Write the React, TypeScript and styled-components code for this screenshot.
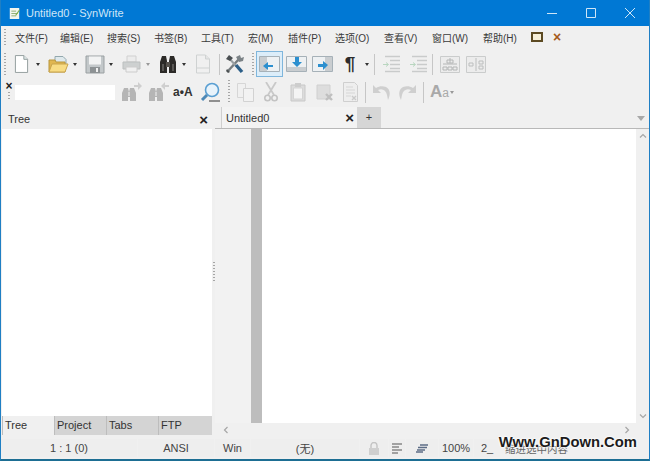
import React from "react";
import styled, { createGlobalStyle } from "styled-components";

const GlobalStyle = createGlobalStyle`
  html, body { margin: 0; padding: 0; background: #f0f0f0; }
  body { font-family: "Liberation Sans", "Noto Sans CJK SC", sans-serif; }
`;

const MENU: [string, number][] = [
  ["文件(F)", 45], ["编辑(E)", 47], ["搜索(S)", 47], ["书签(B)", 47], ["工具(T)", 47], ["宏(M)", 40],
  ["插件(P)", 47], ["选项(O)", 49], ["查看(V)", 48], ["窗口(W)", 51], ["帮助(H)", 47],
];

function DocIcon({ muted }: { muted?: boolean }) {
  const line = muted ? "#cfd2d2" : "#8f9a9a";
  return (
    <svg width="16" height="20" viewBox="0 0 16 20">
      <path d="M1.5 1h9l4 4v14h-13z" fill={muted ? "#f0f0f0" : "#fff"} stroke={line} />
      <path d="M10.5 1v4h4" fill={muted ? "#e4e4e4" : "#dfeaea"} stroke={line} />
      {muted && <path d="M1 14h13" stroke={line} />}
    </svg>
  );
}

function OpenIcon() {
  return (
    <svg width="21" height="19" viewBox="0 0 21 19">
      <path d="M7 8V1.5h8l3 3V9z" fill="#dfe9ec" stroke="#93a8ae" />
      <path d="M1 5h6l1 2h9v10H1z" fill="#e0b650" stroke="#b8963f" />
      <path d="M1 17l3-8h16l-3 8z" fill="#f8dc84" stroke="#c9a44c" />
    </svg>
  );
}

function SaveIcon() {
  return (
    <svg width="20" height="19" viewBox="0 0 20 19">
      <path d="M1 1h18v17H1z" fill="#c3c8ca" stroke="#9aa0a2" />
      <path d="M4 1.5h12v8H4z" fill="#f2f3f3" />
      <path d="M5 12h10v6H5z" fill="#8d9294" />
      <path d="M11 13h2v4h-2z" fill="#f0f0f0" />
    </svg>
  );
}

function PrintIcon() {
  return (
    <svg width="19" height="18" viewBox="0 0 19 18">
      <path d="M5 1h9v6H5z" fill="#ececec" stroke="#d0d0d0" />
      <path d="M1 7h17v7H1z" fill="#cdd0d0" stroke="#bcbfbf" />
      <path d="M4 12h11v5H4z" fill="#f0f0f0" stroke="#cccccc" />
    </svg>
  );
}

function BinocularIcon() {
  return (
    <svg width="20" height="20" viewBox="0 0 20 20">
      <path d="M2 19V8l2-6h4l1 5v12z" fill="#2c2a28" />
      <path d="M18 19V8l-2-6h-4l-1 5v12z" fill="#2c2a28" />
      <path d="M8 8h4v5H8z" fill="#55514c" />
      <path d="M4 10h2v7H4zM14 10h2v7h-2z" fill="#5a5855" />
    </svg>
  );
}

function FindDirIcon({ arrow }: { arrow: "l" | "r" }) {
  return (
    <svg width="20" height="20" viewBox="0 0 20 20">
      <path d="M0 19v-8l2-5h4l1 4v9z" fill="#b5b5b5" />
      <path d="M14 19v-8l-2-5H8l-1 4v9z" fill="#b5b5b5" />
      <path d="M6 10h2v4H6z" fill="#d4d4d4" />
      <path d="M6 15h2v4H6z" fill="#f0f0f0" />
      <path d={arrow === "r" ? "M12 3h4V0l4 4-4 4V5h-4z" : "M20 3h-4V0l-4 4 4 4V5h4z"} fill="#cfcfcf" />
    </svg>
  );
}

function ToolsIcon() {
  return (
    <svg width="20" height="20" viewBox="0 0 20 20">
      <path d="M3 17L14 5" stroke="#777d80" strokeWidth="2.4" />
      <path d="M11 3l4-2 1 3 3-1-1 4-4 1z" fill="#7b8286" />
      <path d="M2 15l3 3-2 1-2-2z" fill="#4b5052" />
      <path d="M4 4l7 8" stroke="#9aa0a3" strokeWidth="2" />
      <path d="M11 11l6 7" stroke="#2c5f88" strokeWidth="3.4" />
      <path d="M1 5l3-4 4 3-3 3z" fill="#4a4f52" />
    </svg>
  );
}

function PaneIcon({ dir }: { dir: "l" | "d" | "r" }) {
  const arrow = {
    l: "M4 10l5-4v3h5v2H9v3z",
    d: "M9 1h4v5h3l-5 5-5-5h3z",
    r: "M16 9l-5-4v3H6v3h5v3z",
  }[dir];
  return (
    <svg width="21" height="16" viewBox="0 0 21 16">
      <path d="M.5.5h20v15H.5z" fill="#eef1f3" stroke="#a6b1b8" />
      {dir === "l" && <path d="M1 1h7v14H1z" fill="#c9cdd0" />}
      {dir === "d" && <path d="M1 11h19v4H1z" fill="#c9cdd0" />}
      {dir === "r" && <path d="M13 1h7v14h-7z" fill="#c9cdd0" />}
      <path d={arrow} fill="#2b8fcf" />
    </svg>
  );
}

function IndentIcon() {
  return (
    <svg width="20" height="18" viewBox="0 0 20 18">
      <path d="M3 1.5h15M8 5.5h10M8 9.5h10M8 13.5h10M3 16.5h15" stroke="#c9cbcb" strokeWidth="1.4" />
      <path d="M1 9.5h5M4 7.5l2.5 2-2.5 2" stroke="#b9d6c0" fill="none" />
    </svg>
  );
}

function TreeBoxIcon({ flip }: { flip?: boolean }) {
  return (
    <svg width="20" height="17" viewBox="0 0 20 17">
      <path d="M.5.5h19v16H.5z" fill="#ececec" stroke="#cacccc" />
      {flip ? (
        <path d="M10 2v13M3 7h4v3H3zM13 5h4v3h-4zM13 10h4v3h-4z" stroke="#bcbebe" fill="none" />
      ) : (
        <path d="M10 2v5M3 8h14M3 11h4v3H3zM8 11h4v3H8zM13 11h4v3h-4zM7 4h6v3H7z" stroke="#b4b6b6" fill="none" />
      )}
    </svg>
  );
}

function MagnifierIcon() {
  return (
    <svg width="21" height="21" viewBox="0 0 21 21">
      <circle cx="12" cy="8" r="6.5" fill="#e8f3fb" stroke="#5a9fd2" strokeWidth="1.6" />
      <path d="M7 13l-5 5" stroke="#4d88b6" strokeWidth="3" />
      <path d="M9 19h11" stroke="#777" strokeWidth="1.6" />
    </svg>
  );
}

function CopyIcon() {
  return (
    <svg width="19" height="20" viewBox="0 0 19 20">
      <path d="M1.5 1.5h8v14h-8z" fill="#f0f0f0" stroke="#d6d6d6" />
      <path d="M7.5 6.5h10v13h-10z" fill="#f2f2f2" stroke="#d2d2d2" />
    </svg>
  );
}

function CutIcon() {
  return (
    <svg width="14" height="20" viewBox="0 0 14 20">
      <path d="M2 0l8 13M12 0L4 13" stroke="#c9c9c9" strokeWidth="1.8" />
      <circle cx="3.5" cy="16" r="2.7" fill="none" stroke="#c3c3c3" strokeWidth="1.6" />
      <circle cx="10.5" cy="16" r="2.7" fill="none" stroke="#c3c3c3" strokeWidth="1.6" />
    </svg>
  );
}

function PasteIcon() {
  return (
    <svg width="16" height="20" viewBox="0 0 16 20">
      <path d="M1 3h14v16H1z" fill="#dcdcdc" stroke="#c8c8c8" />
      <path d="M3.5 6h9v11h-9z" fill="#f4f4f4" stroke="#d4d4d4" />
      <path d="M5 1h6v4H5z" fill="#cdcdcd" />
    </svg>
  );
}

function DeleteIcon() {
  return (
    <svg width="18" height="20" viewBox="0 0 18 20">
      <path d="M1 3h13v14H1z" fill="#dddddd" stroke="#d0d0d0" />
      <path d="M10 12l6 6M16 12l-6 6" stroke="#bfbfbf" strokeWidth="2.4" />
    </svg>
  );
}

function SheetIcon() {
  return (
    <svg width="15" height="20" viewBox="0 0 15 20">
      <path d="M.5.5h11l3 3v16H.5z" fill="#eeeeee" stroke="#cfcfcf" />
      <path d="M3 5h7M3 8h9M3 11h9M3 14h5" stroke="#d6d6d6" />
      <path d="M9 14l4 4M13 14l-4 4" stroke="#cacaca" strokeWidth="1.4" />
    </svg>
  );
}

function UndoIcon({ flip }: { flip?: boolean }) {
  return (
    <svg width="19" height="17" viewBox="0 0 19 17" style={flip ? { transform: "scaleX(-1)" } : undefined}>
      <path d="M1 1v8h8L6 6c4-2 8 0 9 5l1 5c3-6 2-11-2-13-3-1-7-1-10 1z" fill="#cfcfcf" />
    </svg>
  );
}

function LockIcon() {
  return (
    <svg width="12" height="13" viewBox="0 0 12 13">
      <path d="M3 6V3.5a3 3 0 0 1 6 0V6" fill="none" stroke="#c4c4c4" strokeWidth="1.4" />
      <path d="M1 6h10v7H1z" fill="#cfcfcf" />
    </svg>
  );
}

function AlignIcon({ tight }: { tight?: boolean }) {
  if (tight) {
    return (
      <svg width="12" height="9" viewBox="0 0 12 9">
        <path d="M4 1h8M2 3.5h9M1 6h8M0 8h7" stroke="#5d6d86" strokeWidth="1.4" />
      </svg>
    );
  }
  return (
    <svg width="10" height="11" viewBox="0 0 10 11">
      <path d="M0 1h10M0 4h7M0 7h10M0 10h6" stroke="#555" />
    </svg>
  );
}

export default function App() {
  return (
    <>
      <GlobalStyle />
      <Window>
        <TitleBar>
          <AppIcon viewBox="0 0 14 16">
            <path d="M1 1h12v14H1z" fill="#f4f6ee" />
            <path d="M3 5h6M3 8h8M3 11h6" stroke="#7aa05a" />
            <path d="M8 10l5-7 1 1-5 7z" fill="#7fb04a" />
          </AppIcon>
          <TitleText>Untitled0 - SynWrite</TitleText>
          <WinButton>
            <svg width="10" height="10" viewBox="0 0 10 10"><path d="M0 5.5h10" stroke="#cfe6f7" /></svg>
          </WinButton>
          <WinButton>
            <svg width="10" height="10" viewBox="0 0 10 10"><path d="M.5.5h9v9h-9z" fill="none" stroke="#cfe6f7" /></svg>
          </WinButton>
          <WinButton>
            <svg width="10" height="10" viewBox="0 0 10 10"><path d="M0 0l10 10M10 0L0 10" stroke="#cfe6f7" /></svg>
          </WinButton>
        </TitleBar>

        <MenuBar>
          <GripDots $h={18} $left={0} />
          <MenuList>
            {MENU.map(([label, w]) => (
              <MenuItem key={label} $w={w}>{label}</MenuItem>
            ))}
          </MenuList>
          <DockBox />
          <MenuClose>×</MenuClose>
        </MenuBar>

        <ToolRow>
          <GripDots $h={22} $left={0} />
          <Slot $w={15} $left={8}><DocIcon /></Slot>
          <Drop $left={7} />
          <Slot $w={21} $left={8}><OpenIcon /></Slot>
          <Drop $left={4} />
          <Slot $w={20} $left={8}><SaveIcon /></Slot>
          <Drop $left={4} />
          <Slot $w={19} $left={9}><PrintIcon /></Slot>
          <Drop $left={5} $muted />
          <Slot $w={20} $left={8}><BinocularIcon /></Slot>
          <Drop $left={4} />
          <Slot $w={16} $left={9}><DocIcon muted /></Slot>
          <Sep $left={8} />
          <Slot $w={20} $left={5}><ToolsIcon /></Slot>
          <GripDots $h={22} $left={7} />
          <ActivePane><PaneIcon dir="l" /></ActivePane>
          <Slot $w={21} $left={3}><PaneIcon dir="d" /></Slot>
          <Slot $w={21} $left={5}><PaneIcon dir="r" /></Slot>
          <Pilcrow>¶</Pilcrow>
          <Drop $left={8} />
          <Sep $left={5} />
          <Slot $w={20} $left={7}><IndentIcon /></Slot>
          <Slot $w={20} $left={7}><IndentIcon /></Slot>
          <Sep $left={3} />
          <Slot $w={20} $left={7}><TreeBoxIcon /></Slot>
          <Slot $w={20} $left={6}><TreeBoxIcon flip /></Slot>
        </ToolRow>

        <ToolRow>
          <FindSide>
            <FindClose>×</FindClose>
            <GripDots $h={8} $left={0} />
          </FindSide>
          <FindInput />
          <Slot $w={20} $left={7}><FindDirIcon arrow="r" /></Slot>
          <Slot $w={20} $left={7}><FindDirIcon arrow="l" /></Slot>
          <CaseSwap>a•A</CaseSwap>
          <Slot $w={21} $left={5}><MagnifierIcon /></Slot>
          <GripDots $h={24} $left={7} />
          <Slot $w={19} $left={6}><CopyIcon /></Slot>
          <Slot $w={14} $left={9}><CutIcon /></Slot>
          <Slot $w={16} $left={12}><PasteIcon /></Slot>
          <Slot $w={18} $left={10}><DeleteIcon /></Slot>
          <Slot $w={15} $left={9}><SheetIcon /></Slot>
          <Sep $left={7} />
          <Slot $w={19} $left={6}><UndoIcon /></Slot>
          <Slot $w={19} $left={7}><UndoIcon flip /></Slot>
          <Sep $left={6} />
          <FontGlyph>A<small>a</small></FontGlyph>
          <Drop $left={1} $muted />
        </ToolRow>

        <Body>
          <LeftPanel>
            <PanelHead>
              <span>Tree</span>
              <HeadClose>×</HeadClose>
            </PanelHead>
            <PanelBody />
            <BottomTabs>
              <BottomTab $active>Tree</BottomTab>
              <BottomTab>Project</BottomTab>
              <BottomTab>Tabs</BottomTab>
              <BottomTab>FTP</BottomTab>
            </BottomTabs>
          </LeftPanel>

          <Splitter><GripDots $h={20} $left={0} /></Splitter>

          <RightPanel>
            <TabStrip>
              <DocTab>
                <span>Untitled0</span>
                <HeadClose>×</HeadClose>
              </DocTab>
              <AddTab>+</AddTab>
              <TabMenu />
            </TabStrip>
            <EditorRow>
              <Gutter />
              <FoldBar />
              <TextArea />
              <VScroll>
                <ScrollArrow viewBox="0 0 8 5"><path d="M1 4l3-3 3 3" /></ScrollArrow>
                <ScrollArrow viewBox="0 0 8 5"><path d="M1 1l3 3 3-3" /></ScrollArrow>
              </VScroll>
            </EditorRow>
            <HScroll>
              <ScrollArrow viewBox="0 0 5 8"><path d="M4 1L1 4l3 3" /></ScrollArrow>
              <ScrollArrow viewBox="0 0 5 8"><path d="M1 1l3 3-3 3" /></ScrollArrow>
            </HScroll>
          </RightPanel>
        </Body>

        <StatusBar>
          <StatusCell $w={136}>1 : 1 (0)</StatusCell>
          <StatusCell $w={76}>ANSI</StatusCell>
          <StatusCell $w={35}>Win</StatusCell>
          <StatusCell $w={108}>(无)</StatusCell>
          <StatusCell $w={28}><LockIcon /></StatusCell>
          <StatusCell $w={16}><AlignIcon /></StatusCell>
          <StatusCell $w={32}><AlignIcon tight /></StatusCell>
          <StatusCell $w={34}>100%</StatusCell>
          <StatusCell $w={26}>2_</StatusCell>
          <HintCell>缩进选中内容</HintCell>
        </StatusBar>

        <Watermark>Www.GnDown.Com</Watermark>
      </Window>
    </>
  );
}

const Window = styled.div`
  position: relative;
  width: 650px;
  height: 461px;
  box-sizing: border-box;
  display: flex;
  flex-direction: column;
  background: #f0f0f0;
  border: 1px solid #1f7fc4;
  border-top: 0;
  border-bottom: 2px solid #1d6e93;
  overflow: hidden;
  color: #333;
  font-size: 11px;
`;

const TitleBar = styled.div`
  height: 26px;
  margin: 0 -1px;
  flex: none;
  display: flex;
  align-items: center;
  padding: 0 1px 0 9px;
  background: #0078d4;
`;

const AppIcon = styled.svg`
  width: 11px;
  height: 13px;
  margin-right: 6px;
`;

const TitleText = styled.div`
  flex: 1;
  color: #cfe6f7;
  font-size: 11px;
`;

const WinButton = styled.div`
  width: 39px;
  height: 26px;
  display: flex;
  align-items: center;
  justify-content: center;
`;

const MenuBar = styled.div`
  height: 24px;
  flex: none;
  display: flex;
  align-items: center;
  padding-left: 3px;
`;

const MenuList = styled.div`
  display: flex;
  margin: -2px 0 0 9px;
`;

const GripDots = styled.div<{ $h: number; $left: number }>`
  width: 2px;
  height: ${(p) => p.$h}px;
  margin-left: ${(p) => p.$left}px;
  flex: none;
  background-image: linear-gradient(#a6a6a6 50%, transparent 50%);
  background-size: 2px 3px;
`;

const MenuItem = styled.div<{ $w: number }>`
  width: ${(p) => p.$w}px;
  flex: none;
  font-size: 10px;
  white-space: nowrap;
  color: #3a3a3a;
`;

const DockBox = styled.div`
  width: 8px;
  height: 6px;
  margin: -2px 0 0 1px;
  border: 2px solid #5c4a22;
  background: #f6efd8;
`;

const MenuClose = styled.div`
  margin: -2px 0 0 10px;
  color: #a55a1a;
  font-size: 14px;
  font-weight: bold;
  line-height: 14px;
`;

const ToolRow = styled.div`
  height: 28px;
  flex: none;
  display: flex;
  align-items: center;
  padding-left: 3px;
`;

const Slot = styled.div<{ $w: number; $left: number }>`
  width: ${(p) => p.$w}px;
  margin-left: ${(p) => p.$left}px;
  flex: none;
  display: flex;
  align-items: center;
  justify-content: center;
`;

const Drop = styled.div<{ $left: number; $muted?: boolean }>`
  flex: none;
  margin-left: ${(p) => p.$left}px;
  border-left: 2px solid transparent;
  border-right: 2px solid transparent;
  border-top: 3px solid ${(p) => (p.$muted ? "#999" : "#333")};
`;

const Sep = styled.div<{ $left: number }>`
  flex: none;
  width: 1px;
  height: 21px;
  margin-left: ${(p) => p.$left}px;
  background: #c6c6c6;
`;

const ActivePane = styled.div`
  flex: none;
  width: 25px;
  height: 24px;
  margin-left: 2px;
  display: flex;
  align-items: center;
  justify-content: center;
  background: #dcedf9;
  border: 1px solid #7fb6dc;
`;

const Pilcrow = styled.div`
  width: 14px;
  margin-left: 10px;
  flex: none;
  font-size: 19px;
  font-weight: bold;
  color: #2c2c2c;
  text-align: center;
`;

const FindSide = styled.div`
  width: 10px;
  flex: none;
  display: flex;
  flex-direction: column;
  align-items: center;
  gap: 1px;
  margin-top: -2px;
`;

const FindClose = styled.div`
  font-size: 12px;
  font-weight: bold;
  line-height: 9px;
  color: #222;
`;

const FindInput = styled.div`
  width: 100px;
  height: 15px;
  flex: none;
  margin-left: 1px;
  background: #fff;
`;

const CaseSwap = styled.div`
  width: 22px;
  margin-left: 4px;
  flex: none;
  font-size: 12px;
  font-weight: bold;
  color: #333;
  white-space: nowrap;
`;

const FontGlyph = styled.div`
  margin-left: 6px;
  flex: none;
  font-size: 17px;
  font-weight: bold;
  color: #a9a9a9;
  small {
    font-size: 12px;
    font-weight: normal;
  }
`;

const Body = styled.div`
  flex: 1;
  min-height: 0;
  display: flex;
`;

const LeftPanel = styled.div`
  width: 210px;
  margin-left: 1px;
  flex: none;
  display: flex;
  flex-direction: column;
  padding-top: 3px;
  padding-bottom: 2px;
  box-sizing: border-box;
`;

const PanelHead = styled.div`
  height: 20px;
  flex: none;
  display: flex;
  align-items: center;
  justify-content: space-between;
  padding: 0 4px 0 6px;
  font-size: 11px;
`;

const HeadClose = styled.div`
  font-size: 15px;
  line-height: 15px;
  font-weight: bold;
  color: #222;
`;

const PanelBody = styled.div`
  flex: 1;
  background: #fff;
`;

const BottomTabs = styled.div`
  height: 19px;
  flex: none;
  display: flex;
  background: #d4d4d4;
`;

const BottomTab = styled.div<{ $active?: boolean }>`
  width: 52px;
  box-sizing: border-box;
  padding-left: 2px;
  border-left: 1px solid #bdbdbd;
  line-height: 19px;
  font-size: 11px;
  background: ${(p) => (p.$active ? "#f0f0f0" : "transparent")};
`;

const Splitter = styled.div`
  width: 3px;
  flex: none;
  display: flex;
  align-items: center;
  justify-content: center;
`;

const RightPanel = styled.div`
  flex: 1;
  min-width: 0;
  display: flex;
  flex-direction: column;
`;

const TabStrip = styled.div`
  height: 22px;
  flex: none;
  display: flex;
  align-items: flex-end;
  padding-left: 6px;
  border-bottom: 1px solid #b8b8b8;
`;

const DocTab = styled.div`
  width: 136px;
  height: 21px;
  box-sizing: border-box;
  display: flex;
  align-items: center;
  justify-content: space-between;
  padding: 0 3px 0 4px;
  border-left: 1px solid #cfcfcf;
  background: #f3f3f3;
  font-size: 11px;
`;

const AddTab = styled.div`
  width: 24px;
  height: 21px;
  text-align: center;
  line-height: 21px;
  background: #d6d6d6;
  font-size: 11px;
`;

const TabMenu = styled.div`
  margin: 0 4px 7px auto;
  border-left: 4px solid transparent;
  border-right: 4px solid transparent;
  border-top: 5px solid #a8a8a8;
`;

const EditorRow = styled.div`
  flex: 1;
  min-height: 0;
  display: flex;
`;

const Gutter = styled.div`
  width: 36px;
  flex: none;
  background: #f2f2f2;
`;

const FoldBar = styled.div`
  width: 11px;
  flex: none;
  background: #bdbdbd;
`;

const TextArea = styled.div`
  flex: 1;
  background: #fff;
`;

const VScroll = styled.div`
  width: 13px;
  flex: none;
  display: flex;
  flex-direction: column;
  justify-content: space-between;
  align-items: center;
  padding: 3px 0;
  box-sizing: border-box;
  background: #f0f0f0;
`;

const HScroll = styled.div`
  height: 14px;
  flex: none;
  display: flex;
  justify-content: space-between;
  align-items: center;
  padding: 0 18px 0 7px;
`;

const ScrollArrow = styled.svg`
  width: 8px;
  height: 8px;
  fill: none;
  stroke: #a6a6a6;
  stroke-width: 1.2;
`;

const StatusBar = styled.div`
  height: 22px;
  flex: none;
  display: flex;
  align-items: center;
  font-size: 11px;
  color: #444;
`;

const StatusCell = styled.div<{ $w: number }>`
  width: ${(p) => p.$w}px;
  height: 18px;
  flex: none;
  margin-right: 1px;
  display: flex;
  align-items: center;
  justify-content: center;
  background: #eeeeee;
`;

const HintCell = styled.div`
  flex: 1;
  padding-left: 4px;
  font-size: 10.5px;
  color: #666;
`;

const Watermark = styled.div`
  position: absolute;
  right: 12px;
  bottom: 9px;
  font-family: "Liberation Sans", sans-serif;
  font-size: 14.8px;
  font-weight: bold;
  color: #1c1c1c;
  white-space: nowrap;
  text-shadow: 0 0 2px #fff, 0 0 2px #fff, 0 0 3px #fff;
`;
